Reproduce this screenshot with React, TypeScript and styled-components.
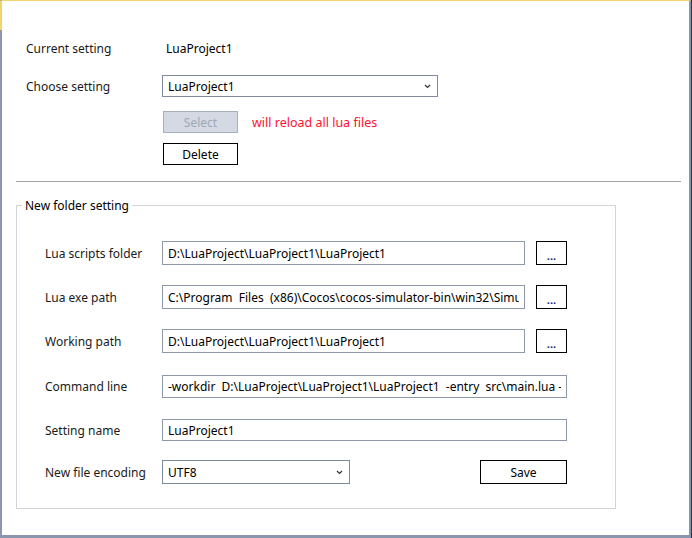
import styled, { createGlobalStyle } from "styled-components";

// ------------ global styles ------------
const GlobalStyle = createGlobalStyle`
  html, body {
    margin: 0;
    padding: 0;
    background: #ffffff;
  }
  * {
    box-sizing: border-box;
  }
`;

const FONT = `"Noto Sans", "Noto Sans CJK SC", sans-serif`;

function Chevron() {
  return (
    <svg width="7" height="5" viewBox="0 0 7 5">
      <path d="M1 1 L3.5 3.5 L6 1" fill="none" stroke="#333" strokeWidth="1.2" />
    </svg>
  );
}

type RowProps = {
  label: string;
  value: string;
  browse?: boolean;
  top: number;
  height?: number;
};

function PathRow({ label, value, browse, top, height = 24 }: RowProps) {
  return (
    <GroupRow $top={top} $height={height}>
      <GroupLabel>{label}</GroupLabel>
      <Field $wide={!browse} readOnly value={value} />
      {browse && <BrowseButton>...</BrowseButton>}
    </GroupRow>
  );
}

export default function App() {
  return (
    <>
      <GlobalStyle />
      <Window>
        {/* ------ current / choose setting ------ */}
        <TopSection>
          <TopRow $top={36}>
            <TopLabel>Current setting</TopLabel>
            <Value>LuaProject1</Value>
          </TopRow>
          <TopRow $top={16}>
            <TopLabel>Choose setting</TopLabel>
            <Dropdown $width={276}>
              <span>LuaProject1</span>
              <Chevron />
            </Dropdown>
          </TopRow>
          <TopRow $top={14}>
            <span />
            <ActionLine>
              <Button disabled>Select</Button>
              <Warning>will reload all lua files</Warning>
            </ActionLine>
          </TopRow>
          <TopRow $top={10}>
            <span />
            <Button>Delete</Button>
          </TopRow>
        </TopSection>

        <Divider />

        {/* ------ new folder group ------ */}
        <Group>
          <Legend>New folder setting</Legend>
          <GroupBody>
            <PathRow
              top={0}
              label="Lua scripts folder"
              value="D:\LuaProject\LuaProject1\LuaProject1"
              browse
            />
            <PathRow
              top={20}
              label="Lua exe path"
              value="C:\Program  Files  (x86)\Cocos\cocos-simulator-bin\win32\Simulator.exe"
              browse
            />
            <PathRow
              top={20}
              label="Working path"
              value="D:\LuaProject\LuaProject1\LuaProject1"
              browse
            />
            <PathRow
              top={22}
              height={23}
              label="Command line"
              value="-workdir  D:\LuaProject\LuaProject1\LuaProject1  -entry  src\main.lua -resolution"
            />
            <PathRow top={21} height={22} label="Setting name" value="LuaProject1" />
            <GroupRow $top={19} $height={24}>
              <GroupLabel>New file encoding</GroupLabel>
              <EncodingLine>
                <Dropdown $width={188}>
                  <span>UTF8</span>
                  <Chevron />
                </Dropdown>
                <SaveButton>Save</SaveButton>
              </EncodingLine>
            </GroupRow>
          </GroupBody>
        </Group>
      </Window>
    </>
  );
}

// ------- component styles -------
const Window = styled.div`
  position: relative;
  width: 691px;
  height: 538px;
  border-top: 1px solid #f3d36c;
  border-left: 2px solid #8c96ac;
  border-right: 2px solid #8793b0;
  border-bottom: 3px solid #8a95ae;
  box-shadow: 1px 0 0 #2b3552;
  font-family: ${FONT};
  font-size: 12px;
  color: #000;

  &::before {
    content: "";
    position: absolute;
    left: -2px;
    top: 0;
    width: 2px;
    height: 29px;
    background: #f3d36c;
  }
`;

const TopSection = styled.div`
  padding-left: 24px;
`;

const TopRow = styled.div<{ $top: number }>`
  display: grid;
  grid-template-columns: 136px auto;
  align-items: center;
  height: 22px;
  margin-top: ${(p) => p.$top}px;
`;

const TopLabel = styled.span`
  color: #1a1a1a;
`;

const Value = styled.span`
  padding-left: 4px;
`;

const Dropdown = styled.div<{ $width: number }>`
  display: flex;
  align-items: center;
  justify-content: space-between;
  width: ${(p) => p.$width}px;
  height: 22px;
  padding: 0 6px 0 5px;
  border: 1px solid #7f8a9c;
  background: #fff;
`;

const ActionLine = styled.div`
  display: flex;
  align-items: center;
  gap: 14px;
`;

const Button = styled.button`
  width: 75px;
  height: 22px;
  margin-left: 1px;
  padding: 0;
  font-family: ${FONT};
  font-size: 12px;
  color: #000;
  background: #fff;
  border: 1px solid #000;

  &:disabled {
    background: #d4d9e3;
    border-color: #a7afbf;
    color: #9fa7b7;
  }
`;

const Warning = styled.span`
  color: #ff1030;
  font-size: 12.5px;
`;

const Divider = styled.hr`
  margin: 16px 8px 0 14px;
  border: none;
  border-top: 1px solid #a3a3a3;
  height: 0;
`;

const Group = styled.fieldset`
  width: 600px;
  height: 312px;
  margin: 15px 0 0 14px;
  padding: 0;
  border: 1px solid #d3d3da;
`;

const Legend = styled.legend`
  margin-left: 5px;
  padding: 0 3px;
  font-size: 12px;
`;

const GroupBody = styled.div`
  display: flex;
  flex-direction: column;
  padding: 27px 0 0 28px;
`;

const GroupRow = styled.div<{ $top: number; $height: number }>`
  display: flex;
  align-items: center;
  height: ${(p) => p.$height}px;
  margin-top: ${(p) => p.$top}px;

  & > input {
    height: ${(p) => p.$height}px;
  }
`;

const GroupLabel = styled.span`
  width: 117px;
  flex: none;
  color: #1a1a1a;
`;

const Field = styled.input<{ $wide: boolean }>`
  width: ${(p) => (p.$wide ? 405 : 363)}px;
  height: 24px;
  padding: 0 5px;
  border: 1px solid #8d98a8;
  font-family: ${FONT};
  font-size: 12px;
  color: #000;
  white-space: pre;
  outline: none;
`;

const BrowseButton = styled.button`
  width: 31px;
  height: 24px;
  margin-left: 11px;
  padding: 4px 0 0;
  font-family: ${FONT};
  font-size: 11px;
  font-weight: 700;
  color: #1c2a80;
  background: #fff;
  border: 1px solid #000;
`;

const EncodingLine = styled.div`
  display: flex;
  align-items: center;
  gap: 130px;

  & > div {
    height: 24px;
  }
`;

const SaveButton = styled(Button)`
  width: 87px;
  height: 24px;
  margin-left: 0;
`;
